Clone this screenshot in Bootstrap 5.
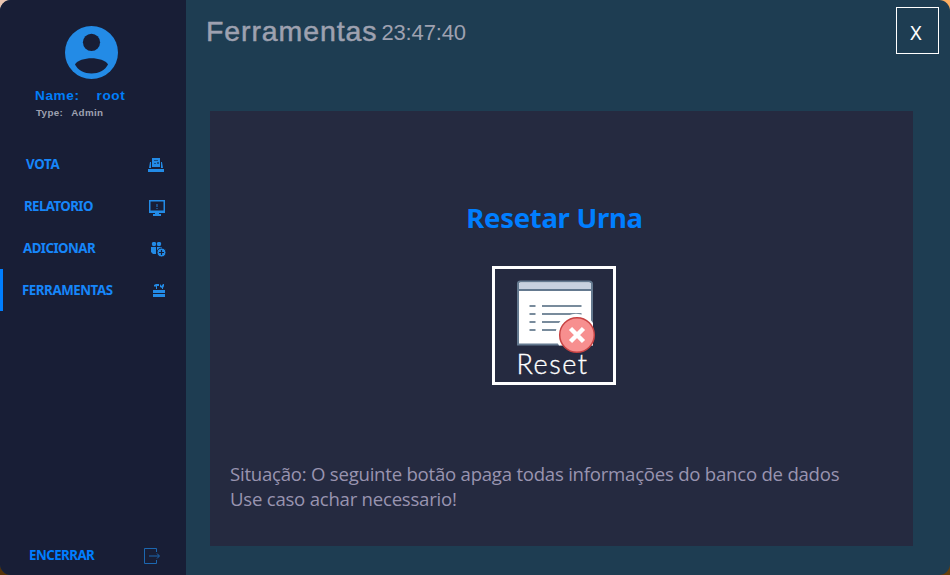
<!DOCTYPE html>
<html lang="pt-BR">
<head>
<meta charset="utf-8">
<title>Ferramentas</title>
<link href="https://cdn.jsdelivr.net/npm/bootstrap@5.3.0/dist/css/bootstrap.min.css" rel="stylesheet">
<style>
body{width:950px;height:575px;overflow:hidden;background:linear-gradient(#e9c4b0 0 50%,#543208 50%) 0 0/50% 100% no-repeat,linear-gradient(#ffae62 0 50%,#66400c 50%) 100% 0/50% 100% no-repeat}
.app{width:950px;height:575px;border-radius:11px;overflow:hidden;background:#1e3d52;white-space:nowrap}
.side{width:186px;background:#181e36}
.profile{height:143px;padding-top:26px}
.avatar{margin-left:65px}
.arial{font-family:"Liberation Sans",Arial,sans-serif}
.user{font-size:13.6px;line-height:16px;letter-spacing:.6px;color:#007ef9;margin:9px 0 0 35px;gap:17px}
.kind{font-size:9.8px;line-height:14px;letter-spacing:.35px;color:#9ea1b0;margin:2px 0 0 36px;gap:8px}
.side-item{height:42px;padding:0 20px 0 0;border:0;border-radius:0;font:700 13.3px "Noto Sans","Open Sans",sans-serif;color:#1686fa}
.side-item:hover{color:#1686fa}
.side-item.current{box-shadow:inset 3px 0 #007eff}
.side-item svg{fill:#238be6;margin-top:3px}
.l1{margin-left:26px;letter-spacing:-.3px}.l2{margin-left:24px;letter-spacing:-.6px}.l3{margin-left:23px;letter-spacing:-.55px}.l4{margin-left:22px;letter-spacing:-.45px}.l5{margin-left:29px;letter-spacing:-.55px;color:#007eff}
.leave{padding-top:2px;padding-right:21px}
.title{font-size:28.5px;line-height:32px;letter-spacing:.9px;color:#9ea1b0;-webkit-text-stroke:.5px #9ea1b0}
.clock{font-size:22px;line-height:36px;letter-spacing:-.15px;color:#9ea1b0;margin-left:4px}
.head{height:111px;padding:7px 11px 0 20px}
.close-btn{width:43px;height:47px;padding:5px 3px 0 0;border:1px solid #fff;border-radius:0;color:#fff;font:18px "Inter",sans-serif}
.stage{width:703px;height:435px;margin-left:24px;background:#252a40}
.stage-title{font:700 27.5px/36px "Noto Sans","Open Sans",sans-serif;letter-spacing:-.3px;color:#007eff;margin:89px 0 0;padding-right:14px}
.reset-btn{width:124px;height:119px;margin:30px 0 0 282px;border:3px solid #fff;border-radius:0;padding:11px 0 0;color:#fff}
.reset-btn svg{margin-left:5px}
.reset-label{font:300 27px/28px "Lato","Inter",sans-serif;letter-spacing:1.5px;-webkit-text-stroke:.35px #fff;margin-top:-4px;padding-right:3px}
.note{font:18.6px/25px "Open Sans","Noto Sans",sans-serif;color:#9994b0;margin:76px 0 0 20px;letter-spacing:-.24px}
</style>
<script src="https://cdn.jsdelivr.net/npm/bootstrap@5.3.0/dist/js/bootstrap.bundle.min.js"></script>
</head>
<body>
<div class="app d-flex">
  <nav class="side d-flex flex-column flex-shrink-0">
    <div class="profile">
      <svg class="avatar d-block" width="53" height="53" viewBox="0 0 53 53"><circle cx="26.5" cy="26.5" r="26.5" fill="#238be6"/><circle cx="26.5" cy="16.3" r="8.6" fill="#181e36"/><path d="M10 38.500C12 34.500 20 32.300 26.500 32.300S41 34.500 43 38.500C40 44.500 33.500 47.500 26.500 47.500S13 44.500 10 38.500Z" fill="#181e36"/></svg>
      <div class="user arial fw-bold d-flex"><span>Name:</span><span>root</span></div>
      <div class="kind arial fw-bold d-flex"><span>Type:</span><span>Admin</span></div>
    </div>
    <button class="btn side-item d-flex align-items-center justify-content-between"><span class="l1">VOTA</span>
      <svg width="19" height="16" viewBox="0 0 19 16"><path d="M5 0h8v9H5zM3 4h1v6h10V4h1l1 6H2zM1 11h16v3H1z"/><path d="M7 2h4v1H7zM7 5h2v1H7zM10 4h2v2h-2z" fill="#174f88"/></svg></button>
    <button class="btn side-item d-flex align-items-center justify-content-between"><span class="l2">RELATORIO</span>
      <svg class="me-n1" width="21" height="16" viewBox="-4 0 21 16"><path fill-rule="evenodd" d="M0 0h16v13H0zM1.500 1.500v9h13v-9z"/><path d="M6 13h4v1h2v2H4v-2h2z"/><path d="M7 4h2v3H7zM7 8h2v1H7z" fill="#1c4f88"/></svg></button>
    <button class="btn side-item d-flex align-items-center justify-content-between"><span class="l3">ADICIONAR</span>
      <svg width="15" height="16" viewBox="1 0 15 16"><circle cx="4" cy="2" r="2.200"/><circle cx="9" cy="2" r="2.200"/><path d="M1 5h5v7H3L1 10zM7 5h5v2L8 9v3H7z"/><circle cx="11.500" cy="10.500" r="4.500" stroke="#181e36"/><path d="M11.500 8v5M9 10.500h5" stroke="#181e36" stroke-width="1.200"/></svg></button>
    <button class="btn side-item current d-flex align-items-center justify-content-between"><span class="l4">FERRAMENTAS</span>
      <svg width="13" height="15" viewBox="1 1 13 15"><path d="M2 2l2-1h3v2H5v3H4V3.500H2zM8 1l1.500 2L11 1h1v2l-1 2v1h-1V5L8 4zM1 7h12v3H1zM1 11h12v3H1z"/></svg></button>
    <button class="btn side-item leave mt-auto d-flex align-items-center justify-content-between"><span class="l5">ENCERRAR</span>
      <svg class="me-1" width="17" height="17" viewBox="0 0 17 17"><path d="M12.500 4V.500H.500v15h12V12M5 8h10M13 5.500L15.500 8 13 10.500" style="fill:none" stroke="#1c67b0"/></svg></button>
  </nav>
  <main class="flex-grow-1">
    <header class="head d-flex align-items-start justify-content-between">
      <div class="arial d-flex pt-1 mt-1"><span class="title">Ferramentas</span><span class="clock">23:47:40</span></div>
      <button class="btn close-btn">X</button>
    </header>
    <section class="stage overflow-hidden">
      <h1 class="stage-title text-center">Resetar Urna</h1>
      <button class="btn reset-btn d-flex flex-column align-items-center">
        <svg width="80" height="74" viewBox="0 0 80 74"><path d="M1 64.500V3.500Q1 1.500 3.500 1.500H72Q75 1.500 75 4V64.500Z" fill="#fff" stroke="#64798f" stroke-width="2"/><path d="M2 9V4Q2 2.500 4 2.500H72Q74 2.500 74 4V9Z" fill="#c8d1df"/><path d="M1 10H75" stroke="#64798f" stroke-width="2"/><path d="M12.500 26h6M25 26h39.500M12.500 34h6M25 34h39.500M12.500 42h6M25 42h21M12.500 50h6M25 50h18" stroke="#788b9c" stroke-width="2"/><path d="M42 65.500A19.500 19.500 0 0 1 76 43V65.500Z" fill="#fff"/><circle cx="60" cy="55" r="17.300" fill="#f78f8f" stroke="#c74343" stroke-width="1.500"/><path d="M53.500 48.500l13 13M66.500 48.500l-13 13" stroke="#fff" stroke-width="4.500"/></svg>
        <span class="reset-label">Reset</span>
      </button>
      <p class="note">Situação: O seguinte botão apaga todas informações do banco de dados<br>Use caso achar necessario!</p>
    </section>
  </main>
</div>
</body>
</html>
